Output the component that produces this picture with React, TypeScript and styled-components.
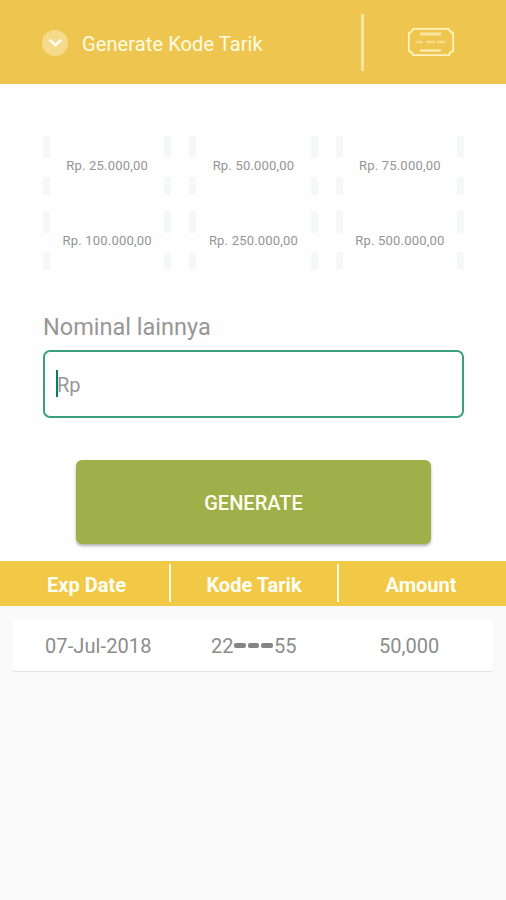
import React from "react";
import styled, { createGlobalStyle } from "styled-components";

const GlobalStyle = createGlobalStyle`
  * { box-sizing: border-box; }
  body { margin: 0; background: #fafafa; font-family: Roboto, sans-serif; }
`;

const Screen = styled.div`
  width: 506px;
  height: 900px;
  overflow: hidden;
  display: flex;
  flex-direction: column;
  background: #fafafa;
  color: #979797;
`;

const Header = styled.header`
  height: 84px;
  flex: none;
  display: flex;
  align-items: center;
  background: #eec64f;
`;

const BackButton = styled.button`
  width: 26px;
  height: 26px;
  margin: 1px 0 0 42px;
  padding: 0;
  border: 0;
  border-radius: 50%;
  background: #f6da8b;
  display: grid;
  place-items: center;
`;

const Title = styled.h1`
  margin: 3px 0 0 14px;
  width: 266px;
  color: #fffbe2;
  font-size: 20px;
  font-weight: 400;
  line-height: 26px;
  letter-spacing: 0.1px;
`;

const HeaderDivider = styled.div`
  width: 3px;
  height: 57px;
  margin-left: 13px;
  background: #f8e4a6;
`;

const TicketButton = styled.button`
  width: 48px;
  height: 30px;
  padding: 0;
  margin-left: 43px;
  border: 0;
  background: none;
  display: flex;
`;

const Form = styled.main`
  height: 477px;
  flex: none;
  padding: 52px 42px 0 43px;
  background: #fefefe;
`;

const AmountGrid = styled.div`
  display: grid;
  grid-template-columns: repeat(3, 1fr);
  gap: 16px 18px;
`;

const AmountCard = styled.button`
  height: 59px;
  padding: 0;
  border: 0;
  background: transparent;
  color: #959595;
  font: 400 13px/16px Roboto, sans-serif;
  display: flex;
  justify-content: space-between;
  align-items: stretch;
`;

const AmountLabel = styled.span`
  align-self: center;
  white-space: nowrap;
  letter-spacing: 0.2px;
`;

const DashedEdge = styled.span`
  width: 7px;
  display: flex;
  flex-direction: column;
  justify-content: space-between;

  &::before,
  &::after {
    content: "";
    background: #f6f8f8;
  }
  &::before { height: 22px; }
  &::after { height: 18px; }
`;

const FieldLabel = styled.label`
  display: block;
  margin-top: 42px;
  font-size: 23.5px;
  line-height: 30px;
`;

const Field = styled.div`
  height: 68px;
  margin-top: 8px;
  padding-left: 11px;
  display: flex;
  align-items: center;
  border: 2px solid #3ba07b;
  border-radius: 7px;
  background: #fff;
`;

const Caret = styled.span`
  width: 2px;
  height: 27px;
  margin-top: -1px;
  background: #087c67;
`;

const Placeholder = styled.span`
  margin: 2px 0 0 -1px;
  font-size: 20px;
  line-height: 26px;
`;

const GenerateButton = styled.button`
  display: block;
  width: 355px;
  height: 84px;
  margin: 42px 0 0 33px;
  padding: 2px 0 0;
  border: 0;
  border-radius: 6px;
  background: #9faf49;
  box-shadow: 0 2px 3px rgba(0, 0, 0, 0.3);
  color: #fffff0;
  font: 500 20px/26px Roboto, sans-serif;
`;

const TableHeader = styled.div`
  height: 44.5px;
  flex: none;
  display: grid;
  grid-template-columns: 169px 2px 166px 2px 167px;
  align-items: center;
  background: #f2c847;
  color: #fffef3;
  font-size: 20px;
  font-weight: 700;
  text-align: center;
`;

const HeadCell = styled.div<{ $before?: number; $after?: number }>`
  padding: 3px ${(p) => p.$after ?? 0}px 0 ${(p) => p.$before ?? 0}px;
`;

const ColumnDivider = styled.div`
  height: 38px;
  background: #fff9e0;
`;

const Row = styled.div`
  height: 52px;
  flex: none;
  margin: 13px 13px 0 13px;
  padding-top: 2px;
  display: grid;
  grid-template-columns: 157px 169px 1fr;
  align-items: center;
  background: #fff;
  border-radius: 2px;
  box-shadow: 0 1px 1px rgba(0, 0, 0, 0.1);
  color: #8c8c8c;
  font-size: 20px;
`;

const Cell = styled.div<{ $inset: number; $tracking?: number }>`
  padding-left: ${(p) => p.$inset}px;
  letter-spacing: ${(p) => p.$tracking ?? 0}px;
  display: flex;
  align-items: center;
`;

const Mask = styled.span`
  display: flex;
  gap: 2px;
  margin: 0 1px 0 1px;
`;

const MaskDash = styled.i`
  width: 11.5px;
  height: 5px;
  border-radius: 2px;
  background: #858585;
`;

const amounts = [
  "Rp. 25.000,00",
  "Rp. 50.000,00",
  "Rp. 75.000,00",
  "Rp. 100.000,00",
  "Rp. 250.000,00",
  "Rp. 500.000,00",
];

const ChevronIcon = () => (
  <svg width="16" height="10" viewBox="0 0 16 10" fill="none">
    <path d="M2.500 1.800 8.500 7.200l5.500-5.400" stroke="#fffdf0" strokeWidth="2.8" />
  </svg>
);

const TicketIcon = () => (
  <svg width="48" height="30" viewBox="0 0 48 30" fill="none" stroke="#fff2bd">
    <path
      d="M6 1.8H42Q42.5 5.2 46.2 6V24Q42.5 24.8 42 28.2H6Q5.5 24.8 1.8 24V6Q5.500 5.200 6 1.800Z"
      strokeWidth="1.8"
      strokeLinejoin="round"
    />
    <path d="M13 7H34" stroke="#fae5a0" strokeWidth="3" />
    <path d="M13 23.500H34" strokeWidth="2" />
    <path
      d="M8.500 15H16M19.500 15H28M30.500 15H38.500"
      stroke="#f9e39b"
      strokeWidth="2.600"
      strokeDasharray="1.800 .7"
    />
  </svg>
);

export default function App() {
  return (
    <>
      <GlobalStyle />
      <Screen>
        <Header>
          <BackButton aria-label="Kembali">
            <ChevronIcon />
          </BackButton>
          <Title>Generate Kode Tarik</Title>
          <HeaderDivider />
          <TicketButton aria-label="Voucher">
            <TicketIcon />
          </TicketButton>
        </Header>
        <Form>
          <AmountGrid>
            {amounts.map((label) => (
              <AmountCard key={label}>
                <DashedEdge />
                <AmountLabel>{label}</AmountLabel>
                <DashedEdge />
              </AmountCard>
            ))}
          </AmountGrid>
          <FieldLabel>Nominal lainnya</FieldLabel>
          <Field>
            <Caret />
            <Placeholder>Rp</Placeholder>
          </Field>
          <GenerateButton>GENERATE</GenerateButton>
        </Form>
        <TableHeader>
          <HeadCell $before={4}>Exp Date</HeadCell>
          <ColumnDivider />
          <HeadCell>Kode Tarik</HeadCell>
          <ColumnDivider />
          <HeadCell $after={3}>Amount</HeadCell>
        </TableHeader>
        <Row>
          <Cell $inset={32} $tracking={0.1}>07-Jul-2018</Cell>
          <Cell $inset={41}>
            22
            <Mask>
              <MaskDash />
              <MaskDash />
              <MaskDash />
            </Mask>
            55
          </Cell>
          <Cell $inset={40}>50,000</Cell>
        </Row>
      </Screen>
    </>
  );
}
